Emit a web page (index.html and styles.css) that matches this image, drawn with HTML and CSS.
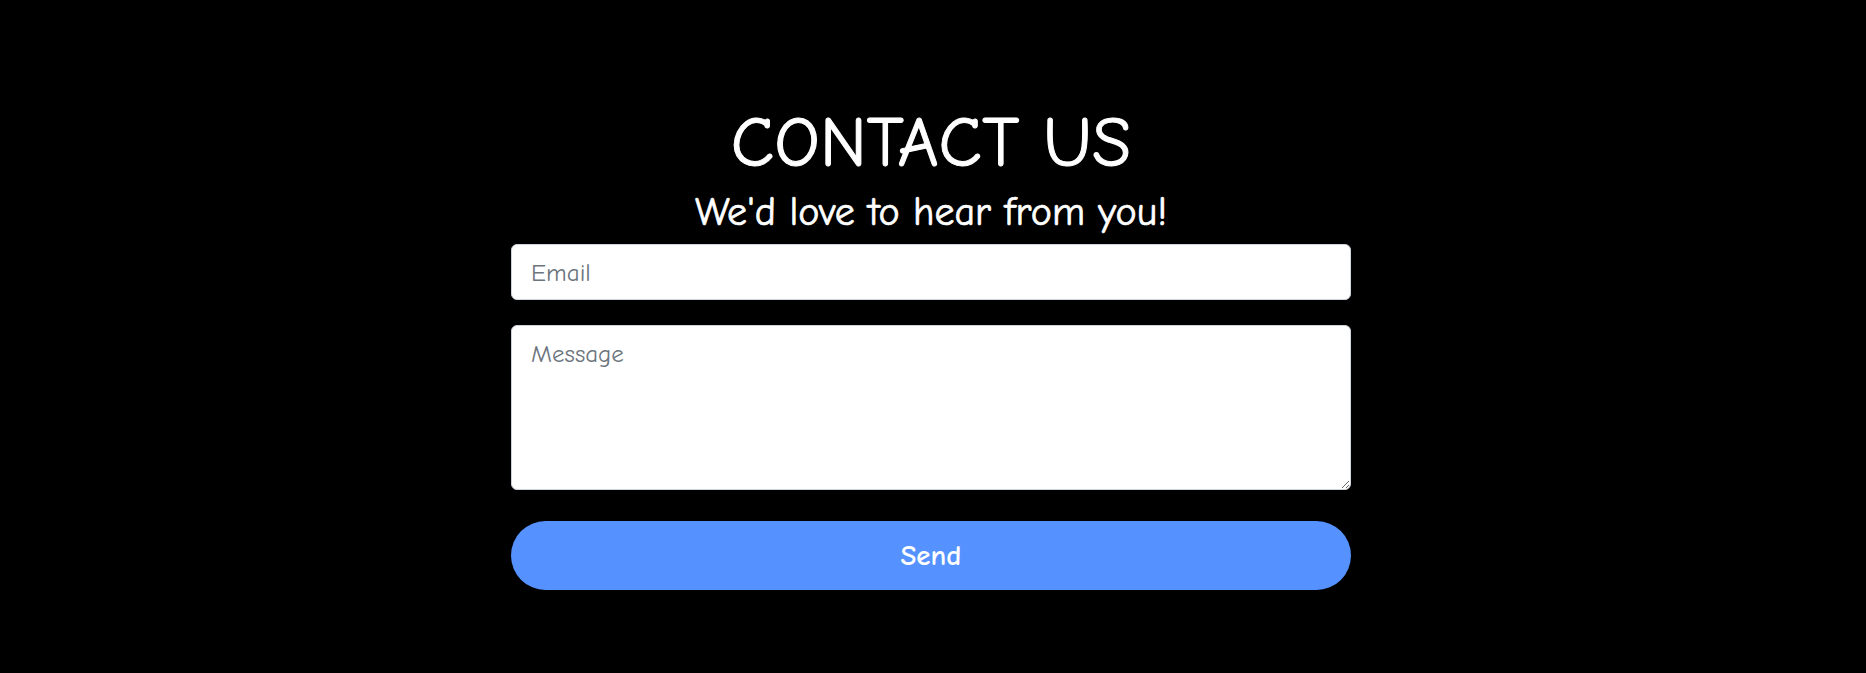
FILE: index.html
```html
<!DOCTYPE html>
<html>
<head>
<meta charset="utf-8">
<link rel="stylesheet" href="styles.css">
</head>
<body>
<main class="contact">
  <h1 class="title">CONTACT US</h1>
  <p class="subtitle">We'd love to hear from you!</p>
  <form class="form">
    <input class="field" type="email" placeholder="Email">
    <textarea class="field area" placeholder="Message"></textarea>
    <button class="send" type="button">Send</button>
  </form>
</main>
</body>
</html>
```
FILE: styles.css
```css
html, body {
  margin: 0;
  padding: 0;
  background: #000;
}
body {
  font-family: "Comic Sans MS", "Comic Neue", "Open Sans", sans-serif;
  color: #fff;
  height: 673px;
}
.contact {
  width: 840px;
  margin: 0 auto;
  padding: 103px 4px 0 0;
  display: flex;
  flex-direction: column;
  align-items: stretch;
}
.title {
  margin: 0;
  text-align: center;
  font-weight: 400;
  font-size: 71px;
  line-height: 80px;
  -webkit-text-stroke: 1px #fff;
}
.subtitle {
  margin: 4px 0 0;
  text-align: center;
  font-size: 40px;
  line-height: 50px;
  -webkit-text-stroke: 0.7px #fff;
}
.form {
  display: flex;
  flex-direction: column;
  margin-top: 7px;
}
.field {
  box-sizing: border-box;
  width: 100%;
  height: 56px;
  border: 1px solid #ced4da;
  border-radius: 6px;
  background: #fff;
  padding: 10px 19px;
  font-family: inherit;
  font-size: 25px;
  color: #212529;
  outline: none;
}
.field::placeholder {
  color: #6c757d;
}
.area {
  height: 165px;
  margin-top: 25px;
  padding-top: 13px;
  resize: vertical;
}
.send {
  margin-top: 31px;
  height: 69px;
  border: none;
  border-radius: 35px;
  background: #5592ff;
  color: #fff;
  font-family: inherit;
  font-weight: 700;
  font-size: 29px;
}
```
